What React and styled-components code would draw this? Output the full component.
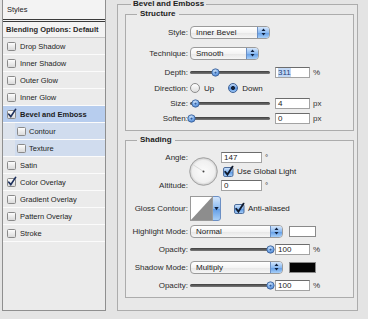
import React from 'react';
import styled, { createGlobalStyle } from 'styled-components';

const GlobalStyle = createGlobalStyle`
  html, body { margin: 0; padding: 0; background: #e4e4e4; }
  body {
    font-family: "Liberation Sans", Arial, sans-serif;
    font-size: 8px;
    color: #1c1c1c;
  }
`;

const styleList = [
  { name: 'Drop Shadow' },
  { name: 'Inner Shadow' },
  { name: 'Outer Glow' },
  { name: 'Inner Glow' },
  { name: 'Bevel and Emboss', checked: true, active: true },
  { name: 'Contour', sub: true },
  { name: 'Texture', sub: true },
  { name: 'Satin' },
  { name: 'Color Overlay', checked: true },
  { name: 'Gradient Overlay' },
  { name: 'Pattern Overlay' },
  { name: 'Stroke' },
];

const ListCheck = ({ checked }) => (
  <svg width="10" height="10" viewBox="0 0 10 10" style={{ flex: 'none', overflow: 'visible' }}>
    <defs>
      <linearGradient id="lc" x1="0" y1="0" x2="0" y2="1">
        <stop offset="0" stopColor="#ffffff" />
        <stop offset="1" stopColor="#d8d8d8" />
      </linearGradient>
    </defs>
    <rect x="0.5" y="1.5" width="8" height="8" rx="1" fill="url(#lc)" stroke="#8a8a8a" />
    {checked && (
      <path d="M1.8 5.2 L3.8 7.6 L8.6 0.4" fill="none" stroke="#1d2f5c" strokeWidth="1.7" strokeLinecap="round" />
    )}
  </svg>
);

const AquaCheck = ({ checked }) => (
  <svg width="11" height="11" viewBox="0 0 11 11" style={{ flex: 'none', overflow: 'visible' }}>
    <defs>
      <linearGradient id="ac" x1="0" y1="0" x2="0" y2="1">
        <stop offset="0" stopColor="#d2e5fb" />
        <stop offset="0.5" stopColor="#85b6f0" />
        <stop offset="0.51" stopColor="#5c99e6" />
        <stop offset="1" stopColor="#a9d0f8" />
      </linearGradient>
    </defs>
    <rect x="0.5" y="1.5" width="9.5" height="9" rx="1.5" fill={checked ? 'url(#ac)' : '#f4f4f4'} stroke="#4f6e9c" />
    {checked && (
      <path d="M2.2 5.8 L4.4 8.6 L9.6 0.6" fill="none" stroke="#111a2c" strokeWidth="1.8" strokeLinecap="round" />
    )}
  </svg>
);

const SelectGlyph = () => (
  <svg width="5" height="8" viewBox="0 0 5 8">
    <path d="M2.5 0.5 L4.5 3 L0.5 3 Z M2.5 7.5 L4.5 5 L0.5 5 Z" fill="#10213f" />
  </svg>
);

const Knob = () => (
  <svg width="9" height="9" viewBox="0 0 9 9">
    <defs>
      <radialGradient id="kn" cx="0.45" cy="0.35" r="0.7">
        <stop offset="0" stopColor="#e4f0fd" />
        <stop offset="0.5" stopColor="#7fb0ec" />
        <stop offset="1" stopColor="#3a75c9" />
      </radialGradient>
    </defs>
    <circle cx="4.5" cy="4.5" r="3.7" fill="url(#kn)" stroke="#3d5f93" strokeWidth="0.8" />
    <circle cx="4.5" cy="4.6" r="1.1" fill="#2f5c9e" />
  </svg>
);

const Dial = ({ angle }) => {
  const rad = (angle * Math.PI) / 180;
  const x = 14.5 + Math.cos(rad) * 12;
  const y = 14.5 - Math.sin(rad) * 12;
  return (
    <svg width="29" height="29" viewBox="0 0 29 29">
      <defs>
        <radialGradient id="dl" cx="0.5" cy="0.5" r="0.5">
          <stop offset="0" stopColor="#fbfbfb" />
          <stop offset="0.8" stopColor="#f0f0f0" />
          <stop offset="1" stopColor="#c9c9c9" />
        </radialGradient>
      </defs>
      <circle cx="14.5" cy="14.5" r="13.8" fill="url(#dl)" stroke="#9c9c9c" strokeWidth="0.9" />
      <line x1="14.5" y1="14.5" x2={x} y2={y} stroke="#d2d2d2" strokeWidth="0.8" />
      <circle cx="14.5" cy="14.5" r="1" fill="#444" />
    </svg>
  );
};

const ContourThumb = () => (
  <svg width="23" height="25" viewBox="0 0 23 25">
    <rect x="0" y="0" width="23" height="25" fill="#ffffff" />
    <polygon points="0,25 23,0 23,25" fill="#8d8d8d" />
    <rect x="0.5" y="0.5" width="22" height="24" fill="none" stroke="#9a9a9a" />
  </svg>
);

const Page = styled.div`
  display: flex;
  align-items: flex-start;
  width: 368px;
  height: 319px;
  overflow: hidden;
`;

const Sidebar = styled.div`
  margin-left: 2px;
  width: 102px;
  height: 310px;
  border: 1px solid #8f8f8f;
  border-top: none;
  background: #ebebeb;
  display: flex;
  flex-direction: column;
  font-size: 7.5px;
`;

const SideHeader = styled.div`
  height: 19px;
  line-height: 19px;
  padding-left: 4px;
  background: #f3f3f3;
  border-bottom: 3px double #3a3a3a;
`;

const BlendRow = styled.div`
  height: 15px;
  line-height: 15px;
  padding-left: 3px;
  background: #f3f3f3;
  border-bottom: 1px solid #c6c6c6;
  font-weight: bold;
  color: #2a2a2a;
`;

const StyleRow = styled.div`
  display: flex;
  align-items: center;
  gap: ${p => (p.$sub ? 2 : 3)}px;
  height: 16px;
  padding-left: ${p => (p.$sub ? 14 : 4)}px;
  border-bottom: 1px solid #fbfbfb;
  font-weight: ${p => (p.$active ? 'bold' : 'normal')};
  background: ${p =>
    p.$active ? '#b7cdee' : p.$sub ? 'linear-gradient(to right, #dde3ec 12px, #d0dcee 12px)' : 'transparent'};
`;

const Group = styled.fieldset`
  margin: 0;
  min-inline-size: 0;
  box-sizing: border-box;
  border: 1px solid #acacac;
`;

const Outer = styled(Group)`
  margin: 0 0 0 11px;
  width: 241px;
  padding: 1px 4px 12px 7px;
  background: #e8e8e8;
`;

const Section = styled(Group)`
  width: 229px;
  margin-top: ${p => p.$mt || 0}px;
  padding: ${p => p.$pt}px 0 ${p => p.$pb}px 0;
  background: #ececec;
`;

const Legend = styled.legend`
  margin-left: ${p => p.$ml}px;
  padding: 0 ${p => p.$pad}px;
  line-height: ${p => p.$lh || 10}px;
  font-weight: bold;
  color: #222;
`;

const Row = styled.div`
  display: flex;
  align-items: center;
  height: ${p => p.$h || 12}px;
  margin-top: ${p => p.$mt || 0}px;
`;

const Label = styled.span`
  width: 62px;
  flex: none;
  text-align: right;
  white-space: nowrap;
  color: #2b2b2b;
`;

const Select = styled.div`
  display: flex;
  align-items: center;
  width: ${p => p.$w}px;
  height: 13px;
  margin-left: 2px;
  box-sizing: border-box;
  padding-left: 5px;
  border: 1px solid #9b9b9b;
  border-radius: 4px;
  overflow: hidden;
  background: linear-gradient(#ffffff, #f4f4f4 50%, #e6e6e6 51%, #f6f6f6);
`;

const SelectArrow = styled.span`
  margin-left: auto;
  width: 11px;
  align-self: stretch;
  display: flex;
  align-items: center;
  justify-content: center;
  border-left: 1px solid #6b8fc4;
  background: linear-gradient(#d4e6fc, #8bbaf1 50%, #5f9be6 51%, #a7cff8);
`;

const Slider = styled.div`
  position: relative;
  width: 80px;
  height: 12px;
  margin: 0 5px 0 2px;
  flex: none;

  &::before {
    content: '';
    position: absolute;
    left: 0;
    right: 0;
    top: 5px;
    height: 3px;
    border-radius: 2px;
    background: linear-gradient(#3e3e3e, #7a7a7a);
  }
`;

const Thumb = styled.span`
  position: absolute;
  top: 2px;
  left: calc(${p => p.$pos}% - 4px);
  display: flex;
`;

const Field = styled.span`
  display: inline-flex;
  align-items: center;
  width: ${p => p.$w || 35}px;
  height: 11px;
  margin-left: ${p => p.$ml || 0}px;
  box-sizing: border-box;
  padding-left: 2px;
  background: #ffffff;
  border: 1px solid #a3a3a3;
  border-top-color: #6c6c6c;
  flex: none;
`;

const Selected = styled.span`
  background: #c2d8f5;
  color: #1d3f7a;
`;

const Unit = styled.span`
  margin-left: 3px;
  color: #333;
`;

const Radio = styled.span`
  width: 10px;
  height: 10px;
  margin: 0 4px 0 ${p => p.$ml}px;
  box-sizing: border-box;
  border-radius: 50%;
  border: 1px solid ${p => (p.$on ? '#3f6296' : '#8c8c8c')};
  background: ${p =>
    p.$on
      ? 'radial-gradient(circle, #16233b 0 1.7px, transparent 2.3px), linear-gradient(#c4dcfa, #5d97e4 55%, #9cc6f5)'
      : 'linear-gradient(#ffffff, #dedede)'};
  flex: none;
`;

const AngleGrid = styled.div`
  display: grid;
  grid-template-columns: 62px 31px 1fr;
  grid-template-rows: 10px 18px 10px;
  align-items: center;
  margin-top: 7px;
`;

const DialCell = styled.div`
  grid-column: 2;
  grid-row: 1 / 4;
  margin-left: 1px;
  display: flex;
`;

const Cell = styled.div`
  grid-column: ${p => p.$col};
  grid-row: ${p => p.$row};
  display: flex;
  align-items: center;
  gap: 3px;
  ${p => (p.$right ? 'justify-content: flex-end;' : '')}
`;

const Contour = styled.div`
  display: flex;
  margin-left: 2px;
  border-radius: 0 3px 3px 0;
  overflow: hidden;
`;

const ContourArrow = styled.span`
  width: 7px;
  display: flex;
  align-items: center;
  justify-content: center;
  border: 1px solid #6b8fc4;
  border-left: none;
  border-radius: 0 3px 3px 0;
  background: linear-gradient(#d4e6fc, #8bbaf1 50%, #5f9be6 51%, #a7cff8);
`;

const Check = styled.span`
  display: flex;
  align-items: center;
  gap: 3px;
  margin-left: ${p => p.$ml}px;
  white-space: nowrap;
`;

const Swatch = styled.span`
  width: 27px;
  height: 11px;
  margin-left: 6px;
  box-sizing: border-box;
  border: 1px solid #8a8a8a;
  background: ${p => p.$color};
`;

const Popup = ({ width, children }) => (
  <Select $w={width}>
    {children}
    <SelectArrow><SelectGlyph /></SelectArrow>
  </Select>
);

const SliderRow = ({ label, pos, value, unit, mt }) => (
  <Row $mt={mt}>
    <Label>{label}</Label>
    <Slider>
      <Thumb $pos={pos}><Knob /></Thumb>
    </Slider>
    <Field>{value}</Field>
    <Unit>{unit}</Unit>
  </Row>
);

export default function App() {
  return (
    <Page>
      <GlobalStyle />
      <Sidebar>
        <SideHeader>Styles</SideHeader>
        <BlendRow>Blending Options: Default</BlendRow>
        {styleList.map(s => (
          <StyleRow key={s.name} $sub={s.sub} $active={s.active}>
            <ListCheck checked={s.checked} />
            {s.name}
          </StyleRow>
        ))}
      </Sidebar>

      <Outer>
        <Legend $ml={6} $pad={2} $lh={8}>Bevel and Emboss</Legend>

        <Section $pt={6} $pb={6}>
          <Legend $ml={11} $pad={3}>Structure</Legend>
          <Row $h={14}>
            <Label>Style:</Label>
            <Popup width={80}>Inner Bevel</Popup>
          </Row>
          <Row $h={14} $mt={7}>
            <Label>Technique:</Label>
            <Popup width={69}>Smooth</Popup>
          </Row>
          <Row $mt={6}>
            <Label>Depth:</Label>
            <Slider>
              <Thumb $pos={31}><Knob /></Thumb>
            </Slider>
            <Field><Selected>311</Selected></Field>
            <Unit>%</Unit>
          </Row>
          <Row $mt={4}>
            <Label>Direction:</Label>
            <Radio $ml={2} />
            Up
            <Radio $ml={14} $on />
            Down
          </Row>
          <SliderRow label="Size:" pos={6} value="4" unit="px" mt={3} />
          <SliderRow label="Soften:" pos={1} value="0" unit="px" mt={3} />
        </Section>

        <Section $mt={4} $pt={0} $pb={6}>
          <Legend $ml={11} $pad={3}>Shading</Legend>
          <AngleGrid>
            <Cell $col={1} $row={1} $right><Label>Angle:</Label></Cell>
            <DialCell><Dial angle={147} /></DialCell>
            <Cell $col={3} $row={1}>
              <Field $w={41} $ml={2}>147</Field>
              <span>°</span>
            </Cell>
            <Cell $col={3} $row={2}>
              <Check $ml={4}><AquaCheck checked />Use Global Light</Check>
            </Cell>
            <Cell $col={1} $row={3} $right><Label>Altitude:</Label></Cell>
            <Cell $col={3} $row={3}>
              <Field $w={41} $ml={2}>0</Field>
              <span>°</span>
            </Cell>
          </AngleGrid>
          <Row $h={25} $mt={6}>
            <Label>Gloss Contour:</Label>
            <Contour>
              <ContourThumb />
              <ContourArrow>
                <svg width="5" height="5" viewBox="0 0 5 5"><path d="M0.3 1 L4.7 1 L2.5 4.2 Z" fill="#10213f" /></svg>
              </ContourArrow>
            </Contour>
            <Check $ml={13}><AquaCheck checked />Anti-aliased</Check>
          </Row>
          <Row $mt={4}>
            <Label>Highlight Mode:</Label>
            <Popup width={93}>Normal</Popup>
            <Swatch $color="#ffffff" />
          </Row>
          <SliderRow label="Opacity:" pos={100} value="100" unit="%" mt={6} />
          <Row $mt={6}>
            <Label>Shadow Mode:</Label>
            <Popup width={93}>Multiply</Popup>
            <Swatch $color="#050505" />
          </Row>
          <SliderRow label="Opacity:" pos={100} value="100" unit="%" mt={6} />
        </Section>
      </Outer>
    </Page>
  );
}
